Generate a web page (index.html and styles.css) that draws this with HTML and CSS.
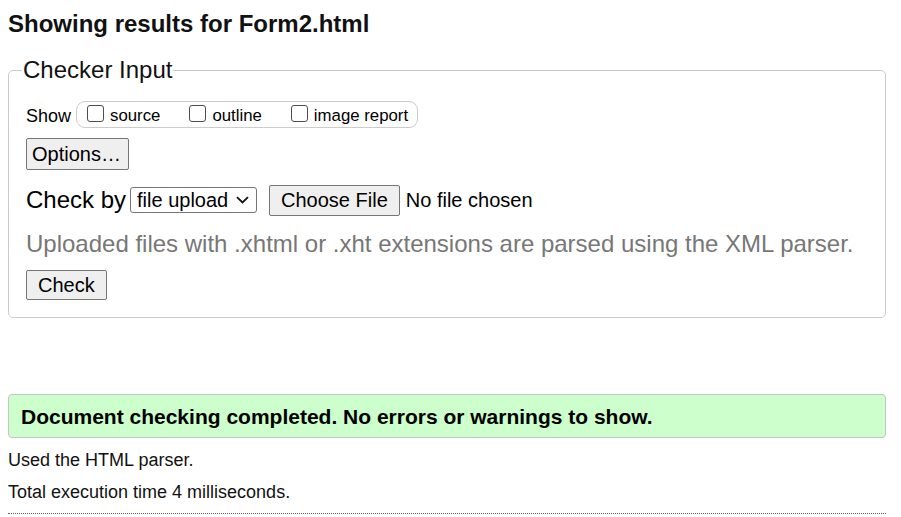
FILE: index.html
```html
<!DOCTYPE html>
<html lang="en">
<head>
<meta charset="utf-8">
<title>Showing results for Form2.html - Nu Html Checker</title>
<link rel="stylesheet" href="styles.css">
</head>
<body>
<h2 class="title">Showing results for Form2.html</h2>
<form class="checker">
  <fieldset class="panel">
    <legend class="panel-legend">Checker Input</legend>
    <div class="show-row">
      <span class="show-label">Show</span>
      <span class="show-group">
        <label class="opt"><input class="cb" type="checkbox"><span>source</span></label>
        <label class="opt"><input class="cb" type="checkbox"><span>outline</span></label>
        <label class="opt"><input class="cb" type="checkbox"><span>image report</span></label>
      </span>
    </div>
    <div class="row-options"><button class="btn btn-options" type="button">Options…</button></div>
    <div class="row-checkby">
      <span class="checkby-label">Check by</span>
      <span class="select-wrap">
        <select class="select"><option>file upload</option></select>
        <svg class="select-arrow" width="13" height="8" viewBox="0 0 13 8"><path d="M1 1.2 L6.5 6.4 L12 1.2" fill="none" stroke="#111" stroke-width="1.8"/></svg>
      </span>
      <button class="btn btn-file" type="button">Choose File</button>
      <span class="file-status">No file chosen</span>
    </div>
    <p class="hint">Uploaded files with .xhtml or .xht extensions are parsed using the XML parser.</p>
    <div class="row-submit"><button class="btn btn-check" type="button">Check</button></div>
  </fieldset>
</form>
<div class="success"><p class="success-text">Document checking completed. No errors or warnings to show.</p></div>
<p class="details">Used the HTML parser.</p>
<p class="details details-2">Total execution time 4 milliseconds.</p>
<hr class="rule">
</body>
</html>
```
FILE: styles.css
```css
html { background: #fff; }
body {
  margin: 8px 15px 8px 8px;
  font-family: "Liberation Sans", Arial, sans-serif;
  color: #000;
}
.title {
  margin: 2px 0 0;
  font-size: 24px;
  line-height: 28px;
  font-weight: bold;
  color: #111;
}
.checker { margin: 18px 0 0; }
.panel {
  margin: 0;
  padding: 0 17px 17px;
  border: 1px solid #ccc;
  border-radius: 5px;
  min-width: 0;
}
.panel-legend {
  margin-left: -4px;
  padding: 0 1px;
  font-size: 24px;
  line-height: 28px;
  color: #111;
}
.show-row {
  margin-top: 17px;
  display: flex;
  align-items: center;
  gap: 5px;
}
.show-label { font-size: 18px; line-height: 21px; padding-top: 3px; }
.show-group {
  display: inline-flex;
  align-items: center;
  height: 27px;
  box-sizing: border-box;
  border: 1px solid #ccc;
  border-radius: 9px;
  padding: 0 9px 0 10px;
  gap: 29px;
}
.opt {
  display: inline-flex;
  align-items: center;
  gap: 6px;
  font-size: 16.8px;
  line-height: 19px;
  padding-top: 2px;
}
.cb {
  appearance: none;
  -webkit-appearance: none;
  margin: -5px 0 0;
  width: 17px;
  height: 17px;
  box-sizing: border-box;
  border: 1.5px solid #4d4d4d;
  border-radius: 3px;
  background: #fff;
}
.row-options { margin-top: 10px; display: flex; }
.btn {
  font-family: "Liberation Sans", Arial, sans-serif;
  font-size: 20px;
  color: #000;
  background: #efefef;
  border: 1px solid #767676;
  border-radius: 2px;
  padding: 0 10px;
  margin: 0;
}
.btn-options { height: 32px; padding: 0 7px 0 5px; }
.row-checkby {
  margin-top: 14px;
  height: 32px;
  display: flex;
  align-items: center;
}
.checkby-label { font-size: 24px; line-height: 28px; margin-right: 4px; }
.select-wrap { position: relative; display: inline-flex; }
.select {
  appearance: none;
  -webkit-appearance: none;
  width: 127px;
  height: 26px;
  box-sizing: border-box;
  border: 1px solid #767676;
  border-radius: 3px;
  background: #fff;
  font-family: "Liberation Sans", Arial, sans-serif;
  font-size: 20px;
  color: #000;
  padding: 0 0 0 6px;
  margin: 0;
}
.select-arrow { position: absolute; right: 8px; top: 9px; pointer-events: none; }
.btn-file { height: 31px; margin-left: 12px; padding: 0 11px; }
.file-status { font-size: 20px; margin-left: 6px; }
.hint {
  margin: 14px 0 0;
  font-size: 24px;
  line-height: 28px;
  color: #777;
}
.row-submit { margin-top: 12px; display: flex; }
.btn-check { height: 30px; padding: 0 11px; }
.success {
  margin-top: 76px;
  height: 44px;
  box-sizing: border-box;
  background: #ccffcc;
  border: 1px solid #c4c4c4;
  border-radius: 4px;
  padding: 1px 12px 0;
}
.success-text {
  margin: 0;
  font-size: 21px;
  line-height: 41px;
  font-weight: bold;
}
.details {
  margin: 12px 0 0;
  font-size: 18px;
  line-height: 21px;
  color: #111;
}
.details-2 { margin-top: 11px; }
.rule {
  margin: 10px 0 0;
  border: 0;
  border-top: 1px dotted #666;
  height: 0;
}
```
